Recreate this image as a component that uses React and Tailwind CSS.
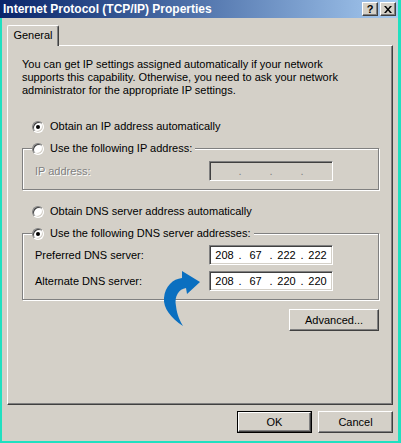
import React from "react";

const raised =
  "border border-t-white border-l-white border-r-[#404040] border-b-[#404040] shadow-[inset_-1px_-1px_0_#808080]";
const sunken =
  "border border-t-[#808080] border-l-[#808080] border-r-white border-b-white shadow-[inset_1px_1px_0_#404040,inset_-1px_-1px_0_#d4d0c8]";
const etched = "border border-[#808080] shadow-[inset_1px_1px_0_#ffffff,1px_1px_0_#ffffff]";

const Radio = ({ checked }) => (
  <span
    className={`w-[12px] h-[12px] rounded-full bg-white flex items-center justify-center shrink-0 ${sunken}`}
  >
    {checked && <span className="w-[4px] h-[4px] rounded-full bg-black" />}
  </span>
);

const RadioRow = ({ checked, label }) => (
  <div className="flex items-center h-[13px] gap-[6px]">
    <Radio checked={checked} />
    <span>{label}</span>
  </div>
);

const IpBox = ({ parts, disabled }) => (
  <div
    className={`w-[124px] h-[20px] flex items-center pl-[1px] ${sunken} ${
      disabled ? "bg-[#d4d0c8] text-[#808080]" : "bg-white text-black"
    }`}
  >
    {[0, 1, 2, 3].map((i) => (
      <React.Fragment key={i}>
        {i > 0 && <span className="w-[4px] text-center">.</span>}
        <span className="w-[27px] text-center">{parts ? parts[i] : ""}</span>
      </React.Fragment>
    ))}
  </div>
);

const Button = ({ children, isDefault, className = "" }) =>
  isDefault ? (
    <div className={`border border-black ${className}`}>
      <div className={`w-full h-full flex items-center justify-center bg-[#d4d0c8] ${raised}`}>
        {children}
      </div>
    </div>
  ) : (
    <div className={`flex items-center justify-center bg-[#d4d0c8] ${raised} ${className}`}>
      {children}
    </div>
  );

const CurvedArrow = () => (
  <svg width="50" height="62" viewBox="0 0 50 62" className="absolute left-[151px] top-[220px]">
    <path
      d="M23 5 L41 16 L28 28 L27 22 C20 23 15 30 17 40 C18 49 21 55 24 60 C12 52 4 42 5 32 C6 20 14 13 23 12 Z"
      fill="#0a6fc0"
    />
  </svg>
);

export default function App() {
  return (
    <div className="w-[401px] h-[443px] bg-[#20e0c0] flex flex-col font-['Liberation_Sans',Arial,sans-serif] text-[11px] text-black">
      {/* title bar */}
      <div className="h-[18px] w-[398px] flex items-center pl-[3px] pr-[2px] bg-gradient-to-r from-[#0a246a] to-[#a6caf0]">
        <span className="flex-1 text-white font-bold text-[12px]">Internet Protocol (TCP/IP) Properties</span>
        <div className="flex gap-[2px]">
          <div className={`w-[16px] h-[14px] bg-[#d4d0c8] flex items-center justify-center font-bold text-[11px] leading-none ${raised}`}>
            ?
          </div>
          <div className={`w-[16px] h-[14px] bg-[#d4d0c8] flex items-center justify-center ${raised}`}>
            <svg width="8" height="7" viewBox="0 0 8 7">
              <path d="M0 0h2l2 2.5L6 0h2L5 3.5 8 7H6L4 4.5 2 7H0l3-3.5z" fill="#000" />
            </svg>
          </div>
        </div>
      </div>

      {/* body */}
      <div className="flex-1 w-[396px] ml-[2px] mb-[2px] bg-[#d4d0c8] flex flex-col pl-[5px]">
        {/* tab strip */}
        <div className="mt-[7px] flex">
          <div className="relative z-10 -mb-px w-[52px] h-[21px] bg-[#d4d0c8] border-t border-l border-t-white border-l-white border-r border-r-[#404040] shadow-[inset_-1px_0_0_#808080] rounded-t-[2px] flex items-center justify-center pb-[1px]">
            General
          </div>
        </div>

        {/* panel */}
        <div className={`relative w-[386px] h-[360px] ${raised}`}>
          <p className="mt-[12px] ml-[14px] leading-[13px] w-[340px]">
            You can get IP settings assigned automatically if your network supports this capability.
            Otherwise, you need to ask your network administrator for the appropriate IP settings.
          </p>

          <div className="mt-[23px] ml-[24px]">
            <RadioRow checked label="Obtain an IP address automatically" />
          </div>

          <fieldset className={`mt-[9px] ml-[14px] w-[357px] pb-[8px] ${etched}`}>
            <legend className="ml-[9px] pr-[3px] bg-[#d4d0c8]">
              <RadioRow label="Use the following IP address:" />
            </legend>
            <div className="mt-[6px] pl-[12px] flex items-center">
              <span className="w-[174px] text-[#808080] [text-shadow:1px_1px_0_#ffffff]">IP address:</span>
              <IpBox disabled />
            </div>
          </fieldset>

          <div className="mt-[15px] ml-[24px]">
            <RadioRow label="Obtain DNS server address automatically" />
          </div>

          <fieldset className={`mt-[9px] ml-[14px] w-[357px] pb-[8px] ${etched}`}>
            <legend className="ml-[9px] pr-[3px] bg-[#d4d0c8]">
              <RadioRow checked label="Use the following DNS server addresses:" />
            </legend>
            <div className="mt-[5px] pl-[12px] flex items-center">
              <span className="w-[174px]">Preferred DNS server:</span>
              <IpBox parts={["208", "67", "222", "222"]} />
            </div>
            <div className="mt-[6px] pl-[12px] flex items-center">
              <span className="w-[174px]">Alternate DNS server:</span>
              <IpBox parts={["208", "67", "220", "220"]} />
            </div>
          </fieldset>

          <div className="mt-[9px] ml-[14px] w-[357px] flex justify-end">
            <Button className="w-[90px] h-[22px]">Advanced...</Button>
          </div>

          <CurvedArrow />
        </div>

        {/* dialog buttons */}
        <div className="mt-[6px] w-[386px] flex justify-end gap-[6px]">
          <Button isDefault className="w-[75px] h-[22px]">OK</Button>
          <Button className="w-[75px] h-[22px]">Cancel</Button>
        </div>
      </div>
    </div>
  );
}
